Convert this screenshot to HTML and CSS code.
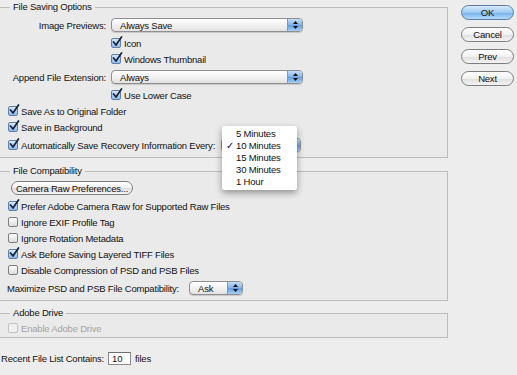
FILE: index.html
```html
<!DOCTYPE html>
<html lang="en">
<head>
  <meta charset="UTF-8">
  <meta name="viewport" content="width=device-width, initial-scale=1.0">
  <title>Preferences - File Handling</title>
  <link rel="stylesheet" href="styles.css">
</head>
<body>

  <div class="dialog">
    <div class="main">

      <fieldset class="group saving">
        <legend>File Saving Options</legend>
        <div class="row field">
          <span class="rlabel">Image Previews:</span>
          <div class="popup wide"><span class="value">Always Save</span><span class="cap"><svg width="7" height="10" viewBox="0 0 7 10"><polygon points="1,4 3.5,1 6,4" /><polygon points="1,6 3.5,9 6,6" /></svg></span></div>
        </div>
        <div class="row check sub"><span class="box on"><svg width="12" height="12" viewBox="0 0 12 12"><path d="M2.5 6 L5 9 L10.5 1" /></svg></span>Icon</div>
        <div class="row check sub"><span class="box on"><svg width="12" height="12" viewBox="0 0 12 12"><path d="M2.5 6 L5 9 L10.5 1" /></svg></span>Windows Thumbnail</div>
        <div class="row field">
          <span class="rlabel">Append File Extension:</span>
          <div class="popup wide"><span class="value">Always</span><span class="cap"><svg width="7" height="10" viewBox="0 0 7 10"><polygon points="1,4 3.5,1 6,4" /><polygon points="1,6 3.5,9 6,6" /></svg></span></div>
        </div>
        <div class="row check sub"><span class="box on"><svg width="12" height="12" viewBox="0 0 12 12"><path d="M2.5 6 L5 9 L10.5 1" /></svg></span>Use Lower Case</div>
        <div class="row check"><span class="box on"><svg width="12" height="12" viewBox="0 0 12 12"><path d="M2.5 6 L5 9 L10.5 1" /></svg></span>Save As to Original Folder</div>
        <div class="row check"><span class="box on"><svg width="12" height="12" viewBox="0 0 12 12"><path d="M2.5 6 L5 9 L10.5 1" /></svg></span>Save in Background</div>
        <div class="row field">
          <span class="box on"><svg width="12" height="12" viewBox="0 0 12 12"><path d="M2.5 6 L5 9 L10.5 1" /></svg></span>
          <span>Automatically Save Recovery Information Every:</span>
          <div class="popup recovery"><span class="value"></span><span class="cap"><svg width="7" height="10" viewBox="0 0 7 10"><polygon points="1,4 3.5,1 6,4" /><polygon points="1,6 3.5,9 6,6" /></svg></span>
            <ul class="menu">
              <li><span class="tick"></span>5 Minutes</li>
              <li><span class="tick">✓</span>10 Minutes</li>
              <li><span class="tick"></span>15 Minutes</li>
              <li><span class="tick"></span>30 Minutes</li>
              <li><span class="tick"></span>1 Hour</li>
            </ul>
          </div>
        </div>
      </fieldset>

      <fieldset class="group compat">
        <legend>File Compatibility</legend>
        <div class="row field"><button class="pill">Camera Raw Preferences...</button></div>
        <div class="row check"><span class="box on"><svg width="12" height="12" viewBox="0 0 12 12"><path d="M2.5 6 L5 9 L10.5 1" /></svg></span>Prefer Adobe Camera Raw for Supported Raw Files</div>
        <div class="row check"><span class="box"></span>Ignore EXIF Profile Tag</div>
        <div class="row check"><span class="box"></span>Ignore Rotation Metadata</div>
        <div class="row check"><span class="box on"><svg width="12" height="12" viewBox="0 0 12 12"><path d="M2.5 6 L5 9 L10.5 1" /></svg></span>Ask Before Saving Layered TIFF Files</div>
        <div class="row check"><span class="box"></span>Disable Compression of PSD and PSB Files</div>
        <div class="row field maximize">
          <span>Maximize PSD and PSB File Compatibility:</span>
          <div class="popup small"><span class="value">Ask</span><span class="cap"><svg width="7" height="10" viewBox="0 0 7 10"><polygon points="1,4 3.5,1 6,4" /><polygon points="1,6 3.5,9 6,6" /></svg></span></div>
        </div>
      </fieldset>

      <fieldset class="group drive">
        <legend>Adobe Drive</legend>
        <div class="row check disabled"><span class="box"></span>Enable Adobe Drive</div>
      </fieldset>

      <div class="row field recent">
        <span>Recent File List Contains:</span>
        <span class="textbox">10</span>
        <span>files</span>
      </div>

    </div>

    <div class="side">
      <button class="btn default">OK</button>
      <button class="btn">Cancel</button>
      <button class="btn">Prev</button>
      <button class="btn">Next</button>
    </div>
  </div>

</body>
</html>
```

FILE: styles.css
```css
body {
  margin: 0;
  background: #ededed;
  font-family: "Liberation Sans", Arial, sans-serif;
  font-size: 9.5px;
  letter-spacing: -0.2px;
  color: #111;
}

.dialog {
  display: flex;
  width: 517px;
  height: 375px;
}

.main {
  width: 448px;
}

.side {
  display: flex;
  flex-direction: column;
  gap: 7px;
  width: 53px;
  margin-left: 13px;
  padding-top: 5px;
}

/* group boxes */
.group {
  margin: 0;
  padding: 1px 0 2px 8px;
  border: 1px solid #bcbcbc;
  border-left: 0;
  background: #eaeaea;
  min-width: 0;
}

.group legend {
  margin-left: 2px;
  padding: 0 3px;
  line-height: 14px;
}

.compat {
  margin-top: 6px;
  padding-top: 0;
}

.drive {
  margin-top: 5px;
  padding-top: 0;
  padding-bottom: 1px;
}

/* rows */
.row {
  display: flex;
  align-items: center;
}

.row.check {
  height: 16px;
  gap: 3px;
}

.row.field {
  height: 20px;
  gap: 3px;
}

.row.sub {
  padding-left: 103px;
}

.rlabel {
  width: 98px;
  text-align: right;
  margin-right: 2px;
}

.maximize {
  gap: 10px !important;
  margin-left: -1px;
}

/* checkboxes */
.box {
  position: relative;
  width: 10px;
  height: 10px;
  box-sizing: border-box;
  border: 1px solid #7d7d7d;
  border-radius: 2px;
  background: linear-gradient(#ffffff, #dcdcdc);
  flex-shrink: 0;
}

.box.on {
  background: linear-gradient(#d6e8fa, #8fbbe9);
  border-color: #5f7fa6;
}

.box svg {
  position: absolute;
  left: -1px;
  top: -3px;
}

.box path {
  fill: none;
  stroke: #13233f;
  stroke-width: 1.7;
  stroke-linecap: round;
  stroke-linejoin: round;
}

.disabled {
  color: #a3a3a3;
}

.disabled .box {
  border-color: #c2c2c2;
  background: #f0f0f0;
}

/* popup buttons */
.popup {
  position: relative;
  display: flex;
  align-items: center;
  height: 14px;
  box-sizing: border-box;
  border: 1px solid #8f8f8f;
  border-radius: 4px;
  background: linear-gradient(#ffffff, #f2f2f2 50%, #e2e2e2);
  box-shadow: 0 1px 1px rgba(0, 0, 0, 0.15);
}

.popup .value {
  padding-left: 8px;
  flex: 1;
}

.popup .cap {
  align-self: stretch;
  width: 14px;
  display: flex;
  align-items: center;
  justify-content: center;
  background: linear-gradient(#c4def7, #7fb3e8 50%, #5d9de2 51%, #a9cff4);
  border-left: 1px solid #7898c0;
  border-radius: 0 3px 3px 0;
}

.popup .cap polygon {
  fill: #111;
}

.wide {
  width: 192px;
}

.recovery {
  width: 80px;
  margin-left: 3px;
}

.small {
  width: 54px;
}

/* open menu */
.menu {
  position: absolute;
  left: 0;
  top: -13px;
  width: 75px;
  margin: 0;
  padding: 2px 0;
  list-style: none;
  background: rgba(255, 255, 255, 0.98);
  border-radius: 3px;
  box-shadow: 0 3px 7px rgba(0, 0, 0, 0.38);
  z-index: 2;
}

.menu li {
  display: flex;
  height: 12px;
  line-height: 12px;
  padding-left: 4px;
}

.tick {
  width: 10px;
}

/* push buttons */
.pill {
  width: 122px;
  height: 14px;
  margin-left: 3px;
  padding: 0;
  font: inherit;
  letter-spacing: inherit;
  color: #111;
  border: 1px solid #7e7e7e;
  border-radius: 7px;
  background: linear-gradient(#ffffff, #f1f1f1 50%, #dedede 51%, #f4f4f4);
}

.btn {
  height: 15px;
  padding: 0;
  font: inherit;
  letter-spacing: inherit;
  color: #111;
  border: 1px solid #7e7e7e;
  border-radius: 8px;
  background: linear-gradient(#ffffff, #f1f1f1 50%, #dedede 51%, #f4f4f4);
}

.btn.default {
  border-color: #5a7ca6;
  background: linear-gradient(#d9ebfc, #9ccaf3 50%, #74b2ec 51%, #b4d9f8);
}

/* recent files */
.recent {
  margin-top: 10px;
  padding-left: 1px;
  gap: 4px !important;
}

.textbox {
  width: 23px;
  height: 13px;
  box-sizing: border-box;
  padding-left: 3px;
  line-height: 11px;
  background: #fff;
  border: 1px solid #8a8a8a;
  border-top-color: #6f6f6f;
}
```
